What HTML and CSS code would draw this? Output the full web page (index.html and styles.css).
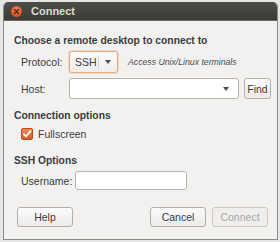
FILE: index.html
```html
<!DOCTYPE html>
<html>
<head>
<meta charset="utf-8">
<link rel="stylesheet" href="styles.css">
</head>
<body>
<div class="window">
  <div class="titlebar">
    <span class="close"><svg width="11" height="11" viewBox="0 0 11 11"><path d="M3.5 3.5 L7.5 7.5 M7.5 3.5 L3.5 7.5" stroke="#4a2a1a" stroke-width="1.4" stroke-linecap="round"/></svg></span>
    <span class="title">Connect</span>
  </div>
  <div class="content">
    <div class="heading h1">Choose a remote desktop to connect to</div>
    <div class="row r-protocol">
      <span class="label">Protocol:</span>
      <div class="combo focus">
        <span class="combo-text">SSH</span>
        <span class="sep"></span>
        <span class="arrow"></span>
      </div>
      <span class="desc">Access Unix/Linux terminals</span>
    </div>
    <div class="row r-host">
      <span class="label">Host:</span>
      <div class="entry-combo"><span class="arrow"></span></div>
      <button class="btn find">Find</button>
    </div>
    <div class="heading h2">Connection options</div>
    <div class="row r-check">
      <span class="checkbox"><svg width="12" height="12" viewBox="0 0 12 12"><path d="M2.8 6.2 L5 8.4 L9.3 3.3" fill="none" stroke="#fff" stroke-width="1.8" stroke-linecap="round" stroke-linejoin="round"/></svg></span>
      <span class="check-label">Fullscreen</span>
    </div>
    <div class="heading h3">SSH Options</div>
    <div class="row r-user">
      <span class="label ulabel">Username:</span>
      <div class="entry user"></div>
    </div>
    <div class="buttons">
      <button class="btn wide">Help</button>
      <span class="spacer"></span>
      <button class="btn wide">Cancel</button>
      <button class="btn wide disabled">Connect</button>
    </div>
  </div>
</div>
</body>
</html>
```
FILE: styles.css
```css
* { box-sizing: border-box; }
html, body { margin: 0; padding: 0; }
body {
  width: 280px;
  height: 242px;
  background: #e6e6e6;
  font-family: "Liberation Sans", "DejaVu Sans", sans-serif;
  font-size: 10.5px;
  color: #3c3c3c;
  overflow: hidden;
  padding: 2px 2px 0 3px;
}
.window {
  width: 275px;
  height: 238px;
  border-radius: 5px 5px 0 0;
  background: #f2f1f0;
  border: 1px solid #8c8a86;
  border-top: none;
  display: flex;
  flex-direction: column;
  overflow: hidden;
}
.titlebar {
  height: 19px;
  flex: none;
  background: linear-gradient(#4e4d48, #3c3b37);
  border-bottom: 1px solid #6a6965;
  display: flex;
  align-items: center;
  padding-left: 7px;
  gap: 9px;
}
.close {
  width: 11px;
  height: 11px;
  border-radius: 50%;
  background: radial-gradient(circle at 50% 35%, #f38b5c, #df4f23 70%, #b03a18);
  display: flex;
  margin-top: 1px;
}
.title {
  color: #dfdbd2;
  font-weight: bold;
  font-size: 11px;
}
.content {
  padding: 0 6px 0 10px;
  display: flex;
  flex-direction: column;
}
.heading {
  font-weight: bold;
  font-size: 10.3px;
  line-height: 14px;
  height: 14px;
  color: #3c3c3c;
}
.h1 { margin-top: 13px; }
.row { display: flex; align-items: center; padding-left: 7px; }
.label { width: 48px; flex: none; }
.r-protocol { margin-top: 3px; height: 22px; }
.combo {
  width: 49px;
  height: 22px;
  border: 1px solid #c8c4bd;
  border-radius: 3px;
  background: linear-gradient(#fbfbfa, #efeeec);
  display: flex;
  align-items: center;
}
.combo.focus { border-color: #e3a887; box-shadow: 0 0 0 1px rgba(240,170,130,0.35); }
.combo-text { padding-left: 5px; width: 28px; }
.sep { width: 1px; height: 14px; background: #d6d2cc; }
.arrow {
  width: 0; height: 0;
  border-left: 3px solid transparent;
  border-right: 3px solid transparent;
  border-top: 4px solid #4c4c4c;
  margin-left: 6px;
}
.desc {
  margin-left: 10px;
  font-style: italic;
  font-size: 8.7px;
  color: #4c4c4c;
}
.r-host { margin-top: 5px; height: 21px; }
.entry-combo {
  width: 170px;
  height: 21px;
  border: 1px solid #b9b5ae;
  border-radius: 3px;
  background: #fff;
  display: flex;
  align-items: center;
  justify-content: flex-end;
  padding-right: 9px;
}
.entry-combo .arrow { margin-left: 0; }
.btn {
  font: inherit;
  color: #3c3c3c;
  border: 1px solid #b3b0aa;
  border-radius: 3px;
  background: linear-gradient(#fbfbfb, #ecebe9);
  padding: 0;
  height: 21px;
}
.find { width: 27px; margin-left: 5px; }
.h2 { margin-top: 10px; }
.r-check { margin-top: 5px; height: 12px; }
.checkbox {
  width: 12px;
  height: 12px;
  border-radius: 2px;
  background: linear-gradient(#f08a55, #dc5a24);
  border: 1px solid #b84a1c;
  display: flex;
  align-items: center;
  justify-content: center;
}
.checkbox svg { flex: none; }
.check-label { margin-left: 5px; }
.h3 { margin-top: 14px; }
.r-user { margin-top: 3px; height: 19px; }
.ulabel { width: 54px; }
.entry {
  height: 19px;
  border: 1px solid #b9b5ae;
  border-radius: 3px;
  background: #fff;
}
.user { width: 112px; }
.buttons {
  margin-top: 17px;
  display: flex;
  padding-left: 3px;
  gap: 6px;
}
.spacer { width: 65px; }
.wide { width: 56px; height: 20px; }
.disabled { color: #a8a6a2; border-color: #cdcac5; background: #efeeec; }
```
